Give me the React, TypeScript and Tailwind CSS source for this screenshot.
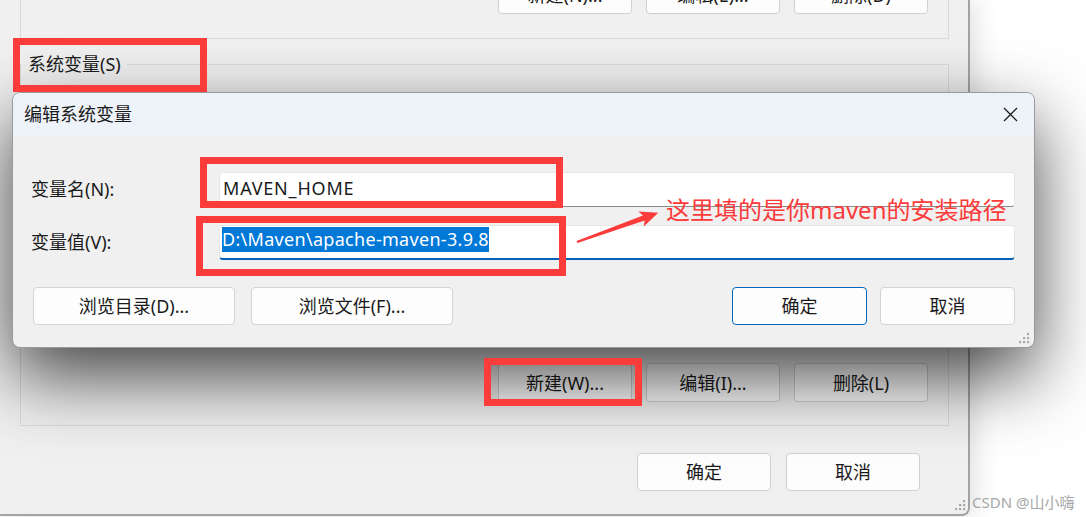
import React from 'react'

const WinButton = ({ label, className = '' }: { label: string; className?: string }) => (
  <div
    className={`flex items-center justify-center rounded-[4px] border bg-[#fdfdfd] text-[18px] leading-none text-[#1a1a1a] ${className}`}
  >
    {label}
  </div>
)

const Grip = () => (
  <svg width="11" height="11" viewBox="0 0 11 11" fill="#a9a9a9">
    <rect x="8" y="0" width="2.2" height="2.2" />
    <rect x="4" y="4" width="2.2" height="2.2" />
    <rect x="8" y="4" width="2.2" height="2.2" />
    <rect x="0" y="8" width="2.2" height="2.2" />
    <rect x="4" y="8" width="2.2" height="2.2" />
    <rect x="8" y="8" width="2.2" height="2.2" />
  </svg>
)

export default function App() {
  return (
    <div className="relative w-[1086px] h-[517px] overflow-hidden bg-white font-['Noto_Sans','Noto_Sans_CJK_SC',sans-serif] text-[#1a1a1a]">
      {/* window behind: 环境变量 */}
      <div className="relative w-[970px] h-[516px] flex flex-col bg-[#f0f0f0] border-r-2 border-b-2 border-[#a3a3a3] rounded-br-[8px] shadow-[6px_0_24px_rgba(0,0,0,0.12)]">
        <div className="ml-[20px] w-[929px] h-[39px] shrink-0 flex items-end justify-end gap-[14px] pr-[20px] pb-[24px] border-x border-b border-[#dadada]">
          <WinButton label="新建(N)..." className="w-[134px] h-[39px] shrink-0 border-[#d0d0d0]" />
          <WinButton label="编辑(E)..." className="w-[134px] h-[39px] shrink-0 border-[#d0d0d0]" />
          <WinButton label="删除(D)" className="w-[134px] h-[39px] shrink-0 border-[#d0d0d0]" />
        </div>

        {/* 系统变量 group box */}
        <div className="ml-[20px] mt-[25px] w-[929px] h-[362px] shrink-0 flex flex-col border border-[#dadada]">
          <span className="self-start -mt-[13px] ml-[1px] px-[6px] bg-[#f0f0f0] text-[18px] leading-[24px]">系统变量(S)</span>
          <div className="flex-1" />
          <div className="flex justify-end gap-[14px] pr-[20px] pb-[23px]">
            <WinButton label="新建(W)..." className="w-[134px] h-[39px] border-[#d0d0d0]" />
            <WinButton label="编辑(I)..." className="w-[134px] h-[39px] border-[#d0d0d0]" />
            <WinButton label="删除(L)" className="w-[134px] h-[39px] border-[#d0d0d0]" />
          </div>
        </div>

        <div className="mt-[27px] flex justify-end gap-[15px] pr-[48px]">
          <WinButton label="确定" className="w-[134px] h-[38px] border-[#d0d0d0]" />
          <WinButton label="取消" className="w-[134px] h-[38px] border-[#d0d0d0]" />
        </div>

        <div className="absolute right-[2px] bottom-[3px]">
          <Grip />
        </div>
      </div>

      {/* 编辑系统变量 dialog */}
      <div className="absolute left-[12px] top-[92px] w-[1023px] h-[256px] flex flex-col overflow-hidden rounded-[8px] border border-[#9a9a9a] bg-[#f0f0f0] shadow-[0_28px_72px_rgba(0,0,0,0.72)]">
        <div className="h-[42px] shrink-0 flex items-center justify-between pl-[11px] pr-[16px] bg-[#eef2f9]">
          <span className="text-[18px] leading-none">编辑系统变量</span>
          <svg width="15" height="15" viewBox="0 0 15 15" stroke="#1a1a1a" strokeWidth="1.3">
            <path d="M1 1 L14 14 M14 1 L1 14" />
          </svg>
        </div>

        <div className="flex-1 flex flex-col pt-[37px] pl-[18px] pr-[19px]">
          <div className="flex items-center h-[35px]">
            <span className="w-[188px] text-[18px]">变量名(N):</span>
            <div className="flex-1 h-full flex items-center pb-[3px] px-[3px] bg-white rounded-[4px] border border-[#e6e6e6] border-b-[#8a8a8a] text-[18px] tracking-[0.8px]">
              MAVEN_HOME
            </div>
          </div>

          <div className="mt-[18px] flex items-center h-[35px]">
            <span className="w-[188px] text-[18px]">变量值(V):</span>
            <div className="flex-1 h-full flex items-start pt-[1px] px-[2px] bg-white rounded-[4px] border border-[#e6e6e6] border-b-2 border-b-[#005fb8] text-[18px]">
              <span className="bg-[#0078d7] text-white leading-[25px] tracking-[0.3px]">D:\Maven\apache-maven-3.9.8</span>
            </div>
          </div>

          <div className="mt-[27px] flex justify-between pl-[2px]">
            <div className="flex gap-[16px]">
              <WinButton label="浏览目录(D)..." className="w-[202px] h-[38px] border-[#d3d3d3]" />
              <WinButton label="浏览文件(F)..." className="w-[202px] h-[38px] border-[#d3d3d3]" />
            </div>
            <div className="flex gap-[13px]">
              <WinButton label="确定" className="w-[135px] h-[38px] border-[#0067c0]" />
              <WinButton label="取消" className="w-[135px] h-[38px] border-[#d3d3d3]" />
            </div>
          </div>
        </div>

        <div className="absolute right-[4px] bottom-[3px]">
          <Grip />
        </div>
      </div>

      {/* annotations */}
      <div className="absolute left-[13px] top-[38px] w-[194px] h-[54px] border-[7px] border-[#fc3b3b]" />
      <div className="absolute left-[200px] top-[157px] w-[363px] h-[51px] border-[7px] border-[#fc3b3b]" />
      <div className="absolute left-[196px] top-[216px] w-[370px] h-[60px] border-[7px] border-[#fc3b3b]" />
      <div className="absolute left-[484px] top-[358px] w-[158px] h-[48px] border-[7px] border-[#fc3b3b]" />

      <svg className="absolute left-0 top-0 pointer-events-none" width="1086" height="517" viewBox="0 0 1086 517">
        <polygon
          fill="#fc3b3b"
          points="576.5,241 577.5,243 644.6,220.4 643.7,226.5 658.3,212.7 638.3,211.5 643,215.6"
        />
      </svg>

      <div className="absolute left-[666px] top-[194px] text-[24px] leading-[32px] text-[#fc3b3b] whitespace-nowrap">
        这里填的是你maven的安装路径
      </div>

      <div className="absolute left-[972px] top-[491px] text-[15px] leading-[22px] text-[#a6a6a6] whitespace-nowrap">
        CSDN @山小嗨
      </div>
    </div>
  )
}
